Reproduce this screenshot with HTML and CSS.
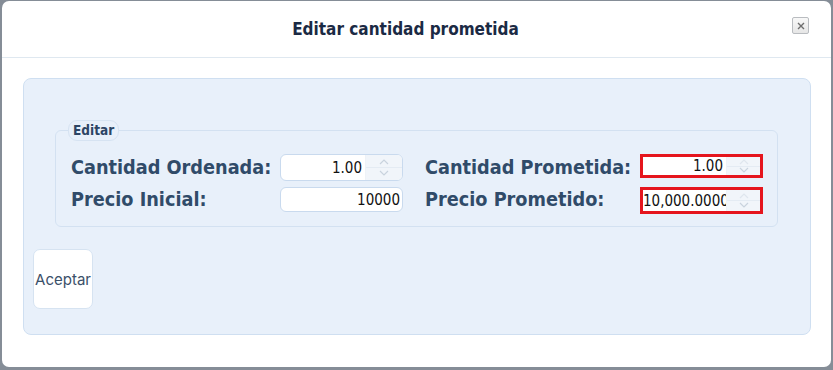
FILE: index.html
```html
<!DOCTYPE html>
<html lang="es">
<head>
<meta charset="utf-8">
<title>Editar cantidad prometida</title>
<link rel="stylesheet" href="styles.css">
</head>
<body>
<div class="modal">
  <div class="modal-header">
    <h1 class="modal-title">Editar cantidad prometida</h1>
    <button class="close-btn" type="button" aria-label="Cerrar">
      <svg width="8" height="8" viewBox="0 0 8 8"><path d="M1 1 L7 7 M7 1 L1 7" stroke="#6d6d6d" stroke-width="1.4" fill="none"/></svg>
    </button>
  </div>
  <div class="modal-body">
    <div class="panel">
      <fieldset class="group">
        <legend class="group-legend">Editar</legend>
        <div class="form-grid">
          <label class="field-label">Cantidad Ordenada:</label>
          <div class="input spin">
            <span class="value">1.00</span>
            <span class="spinner">
              <svg class="arr" width="10" height="6" viewBox="0 0 10 6"><path d="M1 5 L5 1 L9 5" stroke="#c9d3de" stroke-width="1.2" fill="none"/></svg>
              <svg class="arr" width="10" height="6" viewBox="0 0 10 6"><path d="M1 1 L5 5 L9 1" stroke="#c9d3de" stroke-width="1.2" fill="none"/></svg>
            </span>
          </div>
          <label class="field-label col3">Cantidad Prometida:</label>
          <div class="input spin invalid">
            <span class="value">1.00</span>
            <span class="spinner">
              <svg class="arr" width="10" height="6" viewBox="0 0 10 6"><path d="M1 5 L5 1 L9 5" stroke="#dfe6ee" stroke-width="1.2" fill="none"/></svg>
              <svg class="arr" width="10" height="6" viewBox="0 0 10 6"><path d="M1 1 L5 5 L9 1" stroke="#c9d3de" stroke-width="1.2" fill="none"/></svg>
            </span>
          </div>
          <label class="field-label">Precio Inicial:</label>
          <div class="input plain">
            <span class="value">10000</span>
          </div>
          <label class="field-label col3">Precio Prometido:</label>
          <div class="input spin invalid tall">
            <span class="value clip">10,000.0000</span>
            <span class="spinner">
              <svg class="arr" width="10" height="6" viewBox="0 0 10 6"><path d="M1 5 L5 1 L9 5" stroke="#dfe6ee" stroke-width="1.2" fill="none"/></svg>
              <svg class="arr" width="10" height="6" viewBox="0 0 10 6"><path d="M1 1 L5 5 L9 1" stroke="#c9d3de" stroke-width="1.2" fill="none"/></svg>
            </span>
          </div>
        </div>
      </fieldset>
      <button class="accept-btn" type="button">Aceptar</button>
    </div>
  </div>
</div>
</body>
</html>
```

FILE: styles.css
```css
html, body {
  margin: 0;
  padding: 0;
}
body {
  background: #858d97;
  padding: 1px 2px 3px 2px;
  height: 370px;
  box-sizing: border-box;
}
.modal {
  background: #ffffff;
  border-radius: 7px;
  height: 366px;
  display: flex;
  flex-direction: column;
  overflow: hidden;
}
.modal-header {
  height: 56px;
  border-bottom: 1px solid #dfe8f0;
  display: flex;
  align-items: center;
  justify-content: center;
  position: relative;
}
.modal-title {
  margin: 0;
  font-family: "DejaVu Sans", sans-serif;
  font-stretch: condensed;
  font-weight: bold;
  font-size: 17px;
  color: #1b2a44;
  padding-right: 22px;
}
.close-btn {
  position: absolute;
  right: 22px;
  top: 16px;
  width: 17px;
  height: 17px;
  padding: 0;
  border: 1px solid #b9bcc0;
  border-radius: 2px;
  background: linear-gradient(#f8f8f8, #e6e6e6);
  display: flex;
  align-items: center;
  justify-content: center;
}
.modal-body {
  padding: 20px 20px 0 21px;
}
.panel {
  background: #e8f0fa;
  border: 1px solid #cfdff1;
  border-radius: 8px;
  height: 257px;
  box-sizing: border-box;
  padding: 0 0 0 9px;
  display: flex;
  flex-direction: column;
  align-items: flex-start;
}
.group {
  margin: 41px 32px 0 22px;
  align-self: stretch;
  border: 1px solid #d3e1f1;
  border-radius: 6px;
  padding: 13px 0 14px 15px;
  min-width: 0;
}
.group-legend {
  font-family: "DejaVu Sans", sans-serif;
  font-stretch: condensed;
  font-weight: bold;
  font-size: 13.5px;
  color: #2d4564;
  padding: 1px 4px 2px 4px;
  margin-left: -3px;
  border: 1px solid #d6e3f2;
  border-radius: 9px;
}
.form-grid {
  display: grid;
  grid-template-columns: 209px 123px 237px 123px;
  grid-template-rows: 27px 25px;
  row-gap: 6px;
  align-items: center;
}
.field-label {
  font-family: "DejaVu Sans", sans-serif;
  font-stretch: condensed;
  font-weight: bold;
  font-size: 19.7px;
  color: #304b69;
  white-space: nowrap;
}
.col3 {
  padding-left: 22px;
}
.input {
  height: 100%;
  box-sizing: border-box;
  background: #ffffff;
  border: 1px solid #c9daee;
  border-radius: 6px;
  display: flex;
  align-items: stretch;
  overflow: hidden;
  font-family: "DejaVu Sans", sans-serif;
  font-stretch: condensed;
  font-size: 15px;
  color: #111;
}
.input .value {
  flex: 1;
  display: flex;
  align-items: center;
  justify-content: flex-end;
  padding-right: 3px;
  white-space: nowrap;
  overflow: hidden;
}
.input .value.clip {
  justify-content: flex-start;
  padding-left: 0;
  padding-right: 0;
}
.input.plain .value {
  padding-right: 2px;
}
.spinner {
  width: 36px;
  background: #f1f5fa;
  display: flex;
  flex-direction: column;
  align-items: center;
  justify-content: space-evenly;
  border-left: 1px solid #eef2f7;
  background-image: linear-gradient(#f1f5fa 48%, #e4ebf3 48%, #e4ebf3 54%, #f1f5fa 54%);
}
.input.invalid {
  border: 3px solid #e5151d;
  border-radius: 0;
  height: 24px;
  align-self: start;
}
.input.invalid.tall {
  height: 27px;
}
.input.invalid .spinner {
  width: 33px;
}
.accept-btn {
  margin-top: 22px;
  width: 60px;
  height: 60px;
  background: #ffffff;
  border: 1px solid #d6e3f1;
  border-radius: 7px;
  padding: 0;
  font-family: "Inter", "Liberation Sans", sans-serif;
  font-size: 15px;
  color: #3b5069;
}
```
